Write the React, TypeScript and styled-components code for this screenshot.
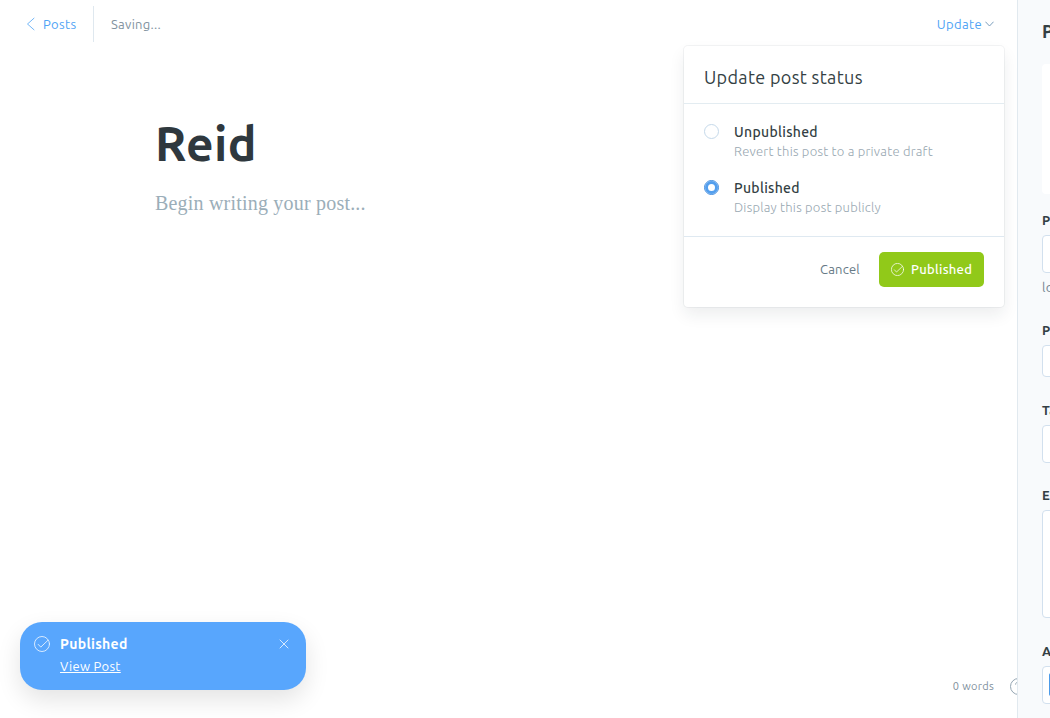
import React from "react";
import styled, { createGlobalStyle } from "styled-components";

const GlobalStyle = createGlobalStyle`
  * { box-sizing: border-box; }
  html, body { margin: 0; height: 100%; overflow: hidden; background: #fff; }
  body {
    font-family: Ubuntu, "Noto Sans", "Open Sans", sans-serif;
    font-size: 13px;
    letter-spacing: 0.23px;
    color: #343f44;
    -webkit-font-smoothing: antialiased;
    text-rendering: optimizeLegibility;
  }
  button { font: inherit; letter-spacing: inherit; border: 0; background: none; padding: 0; }
  h1, h2, h3, p { margin: 0; }
`;

const Page = styled.div`
  position: relative;
  display: flex;
  width: 100vw;
  height: 100vh;
  overflow: hidden;
`;

const Main = styled.main`
  position: relative;
  flex: 0 0 1017px;
  display: flex;
  flex-direction: column;
  overflow: hidden;
`;

const Header = styled.header`
  display: flex;
  align-items: center;
  height: 48px;
  padding: 0 23px 0 26px;
`;

const BackLink = styled.a`
  display: flex;
  align-items: center;
  gap: 8px;
  height: 36px;
  width: 68px;
  border-right: 1px solid #dfe8ef;
  color: #4fa3f5;
  letter-spacing: 0.4px;
`;

const Status = styled.span`
  flex: 1;
  padding-left: 17px;
  color: #82939f;
  letter-spacing: 0.28px;
`;

const UpdateTrigger = styled.button`
  display: flex;
  align-items: center;
  gap: 3px;
  color: #4fa3f5;
  letter-spacing: 0.35px;
`;

const Editor = styled.section`
  flex: 1;
  padding: 61px 155px 0;
`;

const Title = styled.h1`
  color: #2f383e;
  font-size: 48px;
  font-weight: 700;
  line-height: 68px;
  letter-spacing: 0.4px;
`;

const Placeholder = styled.p`
  margin-top: 12px;
  color: #9baeb9;
  font-family: "Liberation Serif", serif;
  font-size: 20px;
  line-height: 28px;
  letter-spacing: 0.2px;
`;

const Footer = styled.footer`
  display: flex;
  align-items: center;
  justify-content: flex-end;
  gap: 16px;
  height: 64px;
  margin-right: -10px;
  color: #7f909d;
  font-size: 11px;
  letter-spacing: 0.3px;
`;

const Popover = styled.div`
  position: absolute;
  z-index: 2;
  top: 46px;
  left: 684px;
  width: 320px;
  height: 261px;
  display: flex;
  flex-direction: column;
  border-radius: 4px;
  background: #fff;
  box-shadow: 0 0 0 1px rgba(99, 114, 130, 0.08), 0 8px 16px rgba(27, 39, 51, 0.08);
`;

const PopoverTitle = styled.h2`
  height: 58px;
  padding: 5px 20px 0;
  border-bottom: 1px solid #e3ecf1;
  font-size: 18px;
  font-weight: 400;
  line-height: 52px;
  letter-spacing: 0.32px;
`;

const Options = styled.div`
  display: flex;
  flex-direction: column;
  gap: 16px;
  height: 133px;
  padding: 18px 20px;
  border-bottom: 1px solid #dfe9f1;
`;

const Option = styled.label`
  display: flex;
  gap: 15px;
  height: 40px;
`;

const Radio = styled.span<{ $checked?: boolean }>`
  flex: 0 0 15px;
  height: 15px;
  margin-top: 2px;
  border-radius: 50%;
  border: 1px solid ${(p) => (p.$checked ? "#3e8be0" : "#c5d9ea")};
  background: #fff;
  box-shadow: ${(p) => (p.$checked ? "inset 0 0 0 3px #539fee" : "none")};
`;

const OptionName = styled.div`
  font-size: 14px;
  font-weight: 500;
  line-height: 20px;
  letter-spacing: 0.32px;
`;

const OptionHint = styled.div`
  color: #98a7b1;
  font-weight: 300;
  line-height: 18px;
`;

const Actions = styled.div`
  display: flex;
  justify-content: flex-end;
  gap: 19px;
  padding: 15px 20px;
`;

const CancelButton = styled.button`
  height: 35px;
  padding-bottom: 1px;
  color: #667985;
`;

const PublishButton = styled.button`
  display: flex;
  align-items: center;
  gap: 7px;
  width: 105px;
  height: 35px;
  padding: 0 0 1px 12px;
  border-radius: 5px;
  background: #91c919;
  color: #fff;
  font-weight: 500;
  letter-spacing: 0.3px;
  svg { margin-top: 1px; }
`;

const Toast = styled.aside`
  position: absolute;
  z-index: 3;
  left: 20px;
  bottom: 28px;
  width: 286px;
  height: 68px;
  display: flex;
  gap: 10px;
  padding: 12px 17px 0 14px;
  border-radius: 22px;
  background: #58a6fd;
  color: #fff;
  box-shadow: 0 10px 24px rgba(0, 0, 0, 0.11);
  svg { margin-top: 2px; opacity: 0.85; }
`;

const ToastBody = styled.div`
  flex: 1;
`;

const ToastTitle = styled.div`
  font-size: 14px;
  font-weight: 700;
  line-height: 20px;
  letter-spacing: 0.32px;
`;

const ToastLink = styled.a`
  display: block;
  margin-top: 2px;
  line-height: 20px;
  letter-spacing: 0.3px;
  text-decoration: underline;
`;

const Sidebar = styled.aside`
  flex: 0 0 350px;
  height: 100%;
  padding: 19px 24px 0;
  border-left: 1px solid #e1e9ef;
  background: #f8fafc;
  overflow: hidden;
`;

const SidebarTitle = styled.h2`
  height: 45px;
  font-size: 18px;
  font-weight: 700;
  line-height: 24px;
`;

const ImageUploader = styled.div`
  height: 130px;
  margin-bottom: 16px;
  border-radius: 4px;
  background: #fff;
`;

const Field = styled.div<{ $gap: number }>`
  margin-bottom: ${(p) => p.$gap}px;
`;

const FieldLabel = styled.h3`
  height: 25px;
  font-size: 13px;
  font-weight: 700;
  line-height: 20px;
`;

const Input = styled.div<{ $height: number }>`
  height: ${(p) => p.$height}px;
  padding: 6px;
  border: 1px solid #d2e0ee;
  border-radius: 4px;
  background: #fff;
`;

const UrlHint = styled.p`
  height: 30px;
  padding-top: 4px;
  color: #738591;
  line-height: 20px;
`;

const AuthorToken = styled.div`
  width: 72px;
  height: 23px;
  border-radius: 2px;
  background: #4c9be9;
`;

const CheckCircle = ({ size }: { size: number }) => (
  <svg width={size} height={size} viewBox="0 0 16 16" fill="none" stroke="currentColor" strokeWidth="0.9" strokeLinecap="round" strokeLinejoin="round">
    <circle cx="8" cy="8" r="7.5" />
    <path d="M4.2 8.4l2.6 2.7 7-6.7" />
  </svg>
);

export default function App() {
  return (
    <Page>
      <GlobalStyle />
      <Main>
        <Header>
          <BackLink>
            <svg width="9" height="14" viewBox="0 0 9 14" fill="none" stroke="currentColor" strokeWidth="0.8" strokeLinecap="round">
              <path d="M8 1.2L1.5 7L8 12.8" />
            </svg>
            Posts
          </BackLink>
          <Status>Saving...</Status>
          <UpdateTrigger>
            Update
            <svg width="9" height="6" viewBox="0 0 9 6" fill="none" stroke="#6c93b4" strokeWidth="0.9" strokeLinecap="round" strokeLinejoin="round">
              <path d="M0.7 1L4.5 5L8.3 1" />
            </svg>
          </UpdateTrigger>
        </Header>
        <Editor>
          <Title>Reid</Title>
          <Placeholder>Begin writing your post...</Placeholder>
        </Editor>
        <Footer>
          <span>0 words</span>
          <svg width="17" height="17" viewBox="0 0 17 17" fill="none" stroke="#94a5b2" strokeWidth="1">
            <circle cx="8.5" cy="8.5" r="8" />
            <path d="M5.6 6.6c0-3.6 5.6-3.2 5.4-.2-.1 1.7-2.5 1.5-2.5 3.5M8.5 11.5v1.2" />
          </svg>
        </Footer>
        <Popover>
          <PopoverTitle>Update post status</PopoverTitle>
          <Options>
            <Option>
              <Radio />
              <div>
                <OptionName>Unpublished</OptionName>
                <OptionHint>Revert this post to a private draft</OptionHint>
              </div>
            </Option>
            <Option>
              <Radio $checked />
              <div>
                <OptionName>Published</OptionName>
                <OptionHint>Display this post publicly</OptionHint>
              </div>
            </Option>
          </Options>
          <Actions>
            <CancelButton>Cancel</CancelButton>
            <PublishButton>
              <CheckCircle size={13} />
              Published
            </PublishButton>
          </Actions>
        </Popover>
      </Main>
      <Sidebar>
        <SidebarTitle>Post Settings</SidebarTitle>
        <ImageUploader />
        <Field $gap={17}>
          <FieldLabel>Post URL</FieldLabel>
          <Input $height={38} />
          <UrlHint>localhost:2368/</UrlHint>
        </Field>
        <Field $gap={23}>
          <FieldLabel>Publish Date</FieldLabel>
          <Input $height={32} />
        </Field>
        <Field $gap={22}>
          <FieldLabel>Tags</FieldLabel>
          <Input $height={38} />
        </Field>
        <Field $gap={23}>
          <FieldLabel>Excerpt</FieldLabel>
          <Input $height={108} />
        </Field>
        <Field $gap={20}>
          <FieldLabel>Authors</FieldLabel>
          <Input $height={38}>
            <AuthorToken />
          </Input>
        </Field>
      </Sidebar>
      <Toast>
        <CheckCircle size={16} />
        <ToastBody>
          <ToastTitle>Published</ToastTitle>
          <ToastLink>View Post</ToastLink>
        </ToastBody>
        <svg width="10" height="16" viewBox="0 0 10 16" fill="none" stroke="#fff" strokeWidth="0.9" strokeLinecap="round">
          <path d="M1 4l8 8M9 4l-8 8" />
        </svg>
      </Toast>
    </Page>
  );
}
